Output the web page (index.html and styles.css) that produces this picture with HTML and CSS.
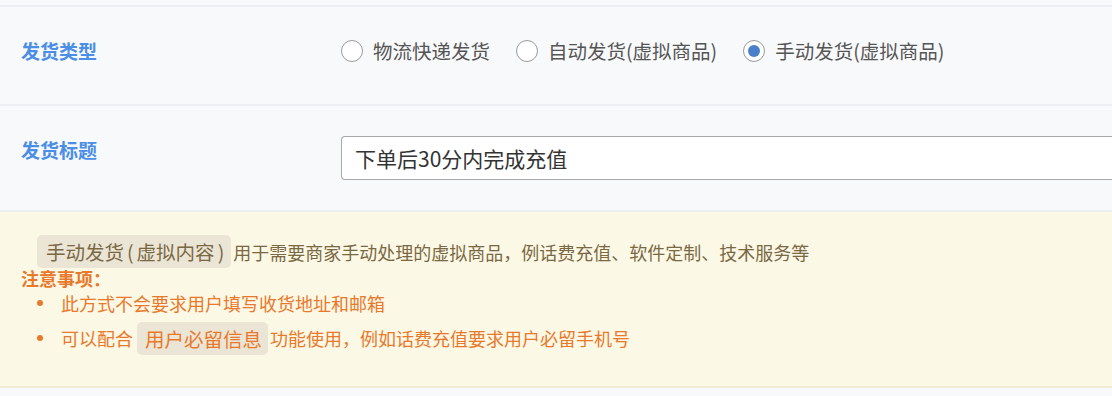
FILE: index.html
```html
<!DOCTYPE html>
<html lang="zh-CN">
<head>
<meta charset="utf-8">
<title>发货设置</title>
<link rel="stylesheet" href="styles.css">
</head>
<body>
<div class="page">
  <div class="topbar"></div>
  <div class="row row-type">
    <div class="label">发货类型</div>
    <div class="radios">
      <label class="radio"><span class="dot"></span><span class="rtext">物流快递发货</span></label>
      <label class="radio"><span class="dot"></span><span class="rtext">自动发货(虚拟商品)</span></label>
      <label class="radio"><span class="dot checked"></span><span class="rtext">手动发货(虚拟商品)</span></label>
    </div>
  </div>
  <div class="row row-title">
    <div class="label label-title">发货标题</div>
    <div class="input">下单后30分内完成充值</div>
  </div>
  <div class="notice">
    <div class="intro"><span class="tag tag-brown">手动发货<span class="paren">(</span>虚拟内容<span class="paren">)</span></span><span class="intro-text">用于需要商家手动处理的虚拟商品，例话费充值、软件定制、技术服务等</span></div>
    <div class="attention">注意事项：</div>
    <ul class="list">
      <li class="item"><span>此方式不会要求用户填写收货地址和邮箱</span></li>
      <li class="item item-tag"><span>可以配合</span><span class="tag tag-orange">用户必留信息</span><span>功能使用，例如话费充值要求用户必留手机号</span></li>
    </ul>
  </div>
</div>
</body>
</html>
```
FILE: styles.css
```css
html, body {
  margin: 0;
  padding: 0;
}
body {
  background: #f8f9fb;
  font-family: "Noto Sans CJK SC", "Noto Sans", sans-serif;
  width: 1112px;
  height: 396px;
  overflow: hidden;
}
.page {
  display: flex;
  flex-direction: column;
}
.topbar {
  height: 5px;
  border-bottom: 2px solid #eceef1;
}
.row {
  display: flex;
  align-items: flex-start;
  padding-left: 21px;
  box-sizing: border-box;
  border-bottom: 2px solid #eceef1;
}
.row-type {
  height: 99px;
  padding-top: 32px;
}
.row-title {
  height: 106px;
  padding-top: 30px;
}
.label {
  width: 320px;
  flex: none;
  font-size: 19px;
  font-weight: 700;
  color: #4a8ee6;
  line-height: 24px;
}
.label-title {
  margin-top: 2px;
}
.radios {
  display: flex;
  align-items: center;
  gap: 26px;
  height: 24px;
}
.radio {
  display: flex;
  align-items: center;
  gap: 10px;
}
.dot {
  width: 20px;
  height: 20px;
  border: 1.5px solid #9a9a9a;
  border-radius: 50%;
  background: #fff;
  display: flex;
  align-items: center;
  justify-content: center;
  flex: none;
}
.dot.checked::after {
  content: "";
  width: 12px;
  height: 12px;
  border-radius: 50%;
  background: #4a7fc9;
}
.rtext {
  font-size: 19.5px;
  color: #555;
  line-height: 24px;
}
.input {
  flex: 1;
  height: 44px;
  box-sizing: border-box;
  border: 1.5px solid #a8a8a8;
  border-right: none;
  border-radius: 4px 0 0 4px;
  background: #fff;
  font-size: 21px;
  color: #333;
  display: flex;
  align-items: center;
  padding-left: 13px;
}
.notice {
  background: #fcf8e6;
  height: 176px;
  box-sizing: border-box;
  border-bottom: 2px solid #f3ecd2;
  padding: 23px 0 0 21px;
}
.intro {
  display: flex;
  align-items: center;
  height: 33px;
}
.tag {
  background: #ebe5d6;
  border-radius: 5px;
  font-size: 19.5px;
  line-height: 33px;
}
.tag-brown {
  color: #7a6843;
  margin-left: 16px;
  padding: 0 4px 0 9px;
}
.paren {
  padding: 0 3px;
}
.intro-text {
  font-size: 18px;
  color: #7a6843;
  margin-left: 2px;
}
.attention {
  font-size: 18px;
  font-weight: 700;
  color: #e8792b;
  line-height: 20px;
}
.list {
  list-style: none;
  margin: 0;
  padding: 0;
}
.item {
  display: flex;
  align-items: center;
  font-size: 18px;
  color: #e8792b;
  height: 30px;
}
.item::before {
  content: "";
  width: 6px;
  height: 6px;
  border-radius: 50%;
  background: #e8792b;
  margin-left: 16px;
  margin-right: 18px;
  flex: none;
}
.item-tag {
  height: 36px;
  margin-top: 2px;
}
.tag-orange {
  color: #e8792b;
  margin: 0 2px 0 4px;
  padding: 0 6px 0 8px;
}
```
